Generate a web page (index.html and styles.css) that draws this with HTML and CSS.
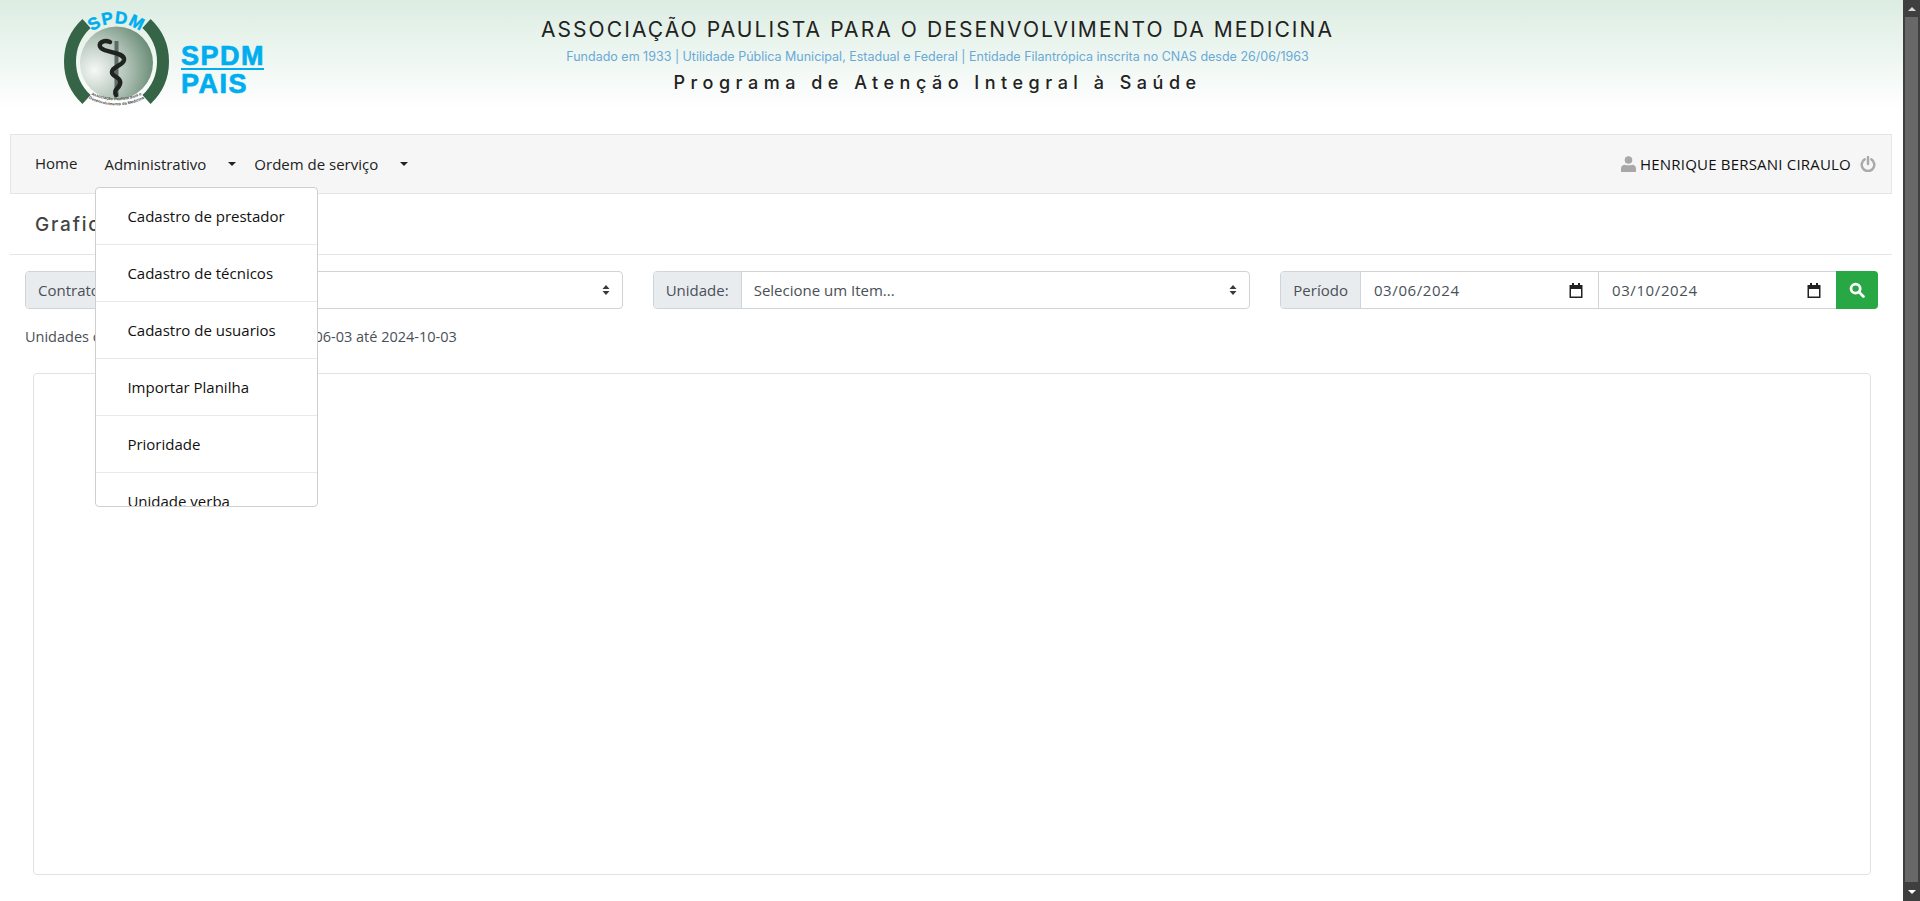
FILE: index.html
```html
<!DOCTYPE html>
<html lang="pt-BR">
<head>
<meta charset="utf-8">
<title>SPDM PAIS</title>
<link rel="stylesheet" href="styles.css">
</head>
<body>
<main class="page">
  <header class="top">
    <svg class="logo" width="290" height="110" viewBox="0 0 290 110">
      <defs>
        <radialGradient id="ball" cx="0.2" cy="0.6" r="0.9">
          <stop offset="0" stop-color="#f6f8f6"/>
          <stop offset="0.5" stop-color="#b0c2b6"/>
          <stop offset="1" stop-color="#5a7f68"/>
        </radialGradient>
        <path id="arcTop" d="M80 47 A40 40 0 0 1 153 47"/>
        <path id="arcBot1" d="M83 90 A60 60 0 0 0 150 90"/>
        <path id="arcBot2" d="M80 93 A60 60 0 0 0 153 93"/>
      </defs>
      <path class="ring" d="M86.500 23.500 A52 52 0 0 0 86.500 99.500"/>
      <path class="ring" d="M146.500 23.500 A52 52 0 0 1 146.500 99.500"/>
      <circle cx="116.500" cy="63" r="36.500" fill="url(#ball)"/>
      <rect x="114.500" y="41" width="4" height="56" fill="#5f6a64"/>
      <path class="snake" d="M110 42 C103 39 97 44 101 48 C106 53 125 52 124 60 C123 66 112 66 112 72 C112 78 122 76 120 84 C118 90 113 89 116 95"/>
      <text class="mark-top"><textPath href="#arcTop" startOffset="50%" text-anchor="middle">SPDM</textPath></text>
      <text class="mark-small"><textPath href="#arcBot1" startOffset="50%" text-anchor="middle">Associação Paulista para o</textPath></text>
      <text class="mark-small"><textPath href="#arcBot2" startOffset="50%" text-anchor="middle">Desenvolvimento da Medicina</textPath></text>
      <text class="brand" x="181" y="65">SPDM</text>
      <rect x="181" y="68" width="83" height="2" fill="#00aeef"/>
      <text class="brand" x="181" y="93">PAIS</text>
    </svg>
    <div class="org">
      <div class="org-name">ASSOCIAÇÃO PAULISTA PARA O DESENVOLVIMENTO DA MEDICINA</div>
      <div class="org-sub">Fundado em 1933 | Utilidade Pública Municipal, Estadual e Federal | Entidade Filantrópica inscrita no CNAS desde 26/06/1963</div>
      <div class="org-prog">Programa de Atenção Integral à Saúde</div>
    </div>
  </header>

  <nav class="navbar">
    <a class="nav-link nav-home">Home</a>
    <div class="nav-drop">
      <a class="nav-link nav-admin">Administrativo<i class="caret"></i></a>
      <ul class="menu">
        <li>Cadastro de prestador</li>
        <li>Cadastro de técnicos</li>
        <li>Cadastro de usuarios</li>
        <li>Importar Planilha</li>
        <li>Prioridade</li>
        <li>Unidade verba</li>
      </ul>
    </div>
    <a class="nav-link nav-os">Ordem de serviço<i class="caret"></i></a>
    <div class="user">
      <svg class="user-ico" width="15" height="16" viewBox="0 0 15 16"><circle cx="7.500" cy="4" r="3.800"/><path d="M0 16 V12.500 C0 10 2 8.800 3.800 8.800 C5 9.500 10 9.500 11.200 8.800 C13 8.800 15 10 15 12.500 V16 Z"/></svg>
      <span>HENRIQUE BERSANI CIRAULO</span>
      <svg class="power" width="16" height="16" viewBox="0 0 16 16"><path d="M4.600 3.400 A6.300 6.300 0 1 0 11.400 3.400"/><path d="M8 1 V8"/></svg>
    </div>
  </nav>

  <h1 class="title">Graficos</h1>

  <section class="filters">
    <div class="group">
      <span class="addon">Contrato:</span>
      <div class="field sel"><span>Selecione um Item...</span><svg class="updown" width="8" height="12" viewBox="0 0 8 12"><path d="M4 1 L7.500 5 H0.500 Z M4 11 L0.500 7 H7.500 Z"/></svg></div>
    </div>
    <div class="group">
      <span class="addon">Unidade:</span>
      <div class="field sel"><span>Selecione um Item...</span><svg class="updown" width="8" height="12" viewBox="0 0 8 12"><path d="M4 1 L7.500 5 H0.500 Z M4 11 L0.500 7 H7.500 Z"/></svg></div>
    </div>
    <div class="group">
      <span class="addon">Período</span>
      <div class="field date"><span>03/06/2024</span><svg class="cal" width="14" height="15" viewBox="0 0 14 15"><path d="M3 0 H5 V2 H9 V0 H11 V2 H13.500 V15 H0.500 V2 H3 Z M2 6 V13.500 H12 V6 Z"/></svg></div>
      <div class="field date"><span>03/10/2024</span><svg class="cal" width="14" height="15" viewBox="0 0 14 15"><path d="M3 0 H5 V2 H9 V0 H11 V2 H13.500 V15 H0.500 V2 H3 Z M2 6 V13.500 H12 V6 Z"/></svg></div>
      <button class="search"><svg width="16" height="16" viewBox="0 0 15 15"><circle cx="6.200" cy="6.200" r="4.300"/><path d="M9.500 9.500 L13.500 13.500"/></svg></button>
    </div>
  </section>

  <p class="range">Unidades com ordens de serviços de 2024-06-03 até 2024-10-03</p>

  <section class="card"></section>
</main>

<aside class="scrollbar">
  <div class="sb-btn"><i class="sb-up"></i></div>
  <div class="sb-track"><div class="sb-thumb"></div></div>
  <div class="sb-btn sb-btn-end"><i class="sb-down"></i></div>
</aside>
</body>
</html>
```
FILE: styles.css
```css
* { box-sizing: border-box; }
html, body { height: 100%; }
body {
  margin: 0;
  display: flex;
  overflow: hidden;
  background: #fff;
  color: #212529;
  font-family: "Open Sans", "Noto Sans", sans-serif;
  font-size: 15px;
}
.page { flex: 1; min-width: 0; padding: 0 11px 0 10px; position: relative; }

/* header */
.top {
  margin: 0 -11px 0 -10px;
  height: 134px;
  display: flex;
  background: linear-gradient(#dcede2 0, #fff 110px);
}
.logo { flex: none; }
.ring { fill: none; stroke: #356546; stroke-width: 12; }
.snake { fill: none; stroke: #1f2321; stroke-width: 4.500; stroke-linecap: round; }
.mark-top { font: bold 17px "Liberation Sans", sans-serif; fill: #00aeef; stroke: #00aeef; stroke-width: .5px; letter-spacing: .8px; }
.mark-small { font: bold 4px "Liberation Sans", sans-serif; fill: #444; }
.brand { font: bold 27px "Liberation Sans", sans-serif; fill: #00aeef; stroke: #00aeef; stroke-width: .7px; letter-spacing: 1.500px; }
.org { position: absolute; left: 0; width: 1875px; top: 0; text-align: center; pointer-events: none; }
.org-name { margin-top: 17px; font: 400 21px/26px Inter, sans-serif; letter-spacing: 2.080px; color: #222; }
.org-sub { margin-top: 6px; font: 400 12.500px/16px Inter, sans-serif; color: #6aa9d6; }
.org-prog { margin-top: 7px; font: 500 18px/22px Inter, sans-serif; letter-spacing: 5.500px; color: #222; }

/* navbar */
.navbar {
  height: 60px;
  display: flex;
  align-items: center;
  padding: 0 15px 0 24px;
  background: #f6f6f6;
  border: 1px solid #e5e5e5;
}
.nav-link { color: #222; white-space: nowrap; }
.nav-home { margin-bottom: 2px; }
.nav-drop { position: relative; margin-left: 27px; }
.nav-admin, .nav-os { display: flex; align-items: center; }
.nav-os { margin-left: 18px; }
.caret {
  margin-left: 22px;
  border-top: 4.500px solid #222;
  border-left: 4.500px solid transparent;
  border-right: 4.500px solid transparent;
}
.menu {
  position: absolute;
  z-index: 5;
  top: 33px;
  left: -9px;
  width: 223px;
  height: 320px;
  margin: 0;
  padding: 0;
  list-style: none;
  overflow: hidden;
  background: #fff;
  border: 1px solid #cfcfcf;
  border-radius: 4px;
}
.menu li {
  height: 57px;
  padding: 17px 0 0 31px;
  line-height: 22px;
  color: #111;
  border-bottom: 1px solid #e6e8ec;
}
.user { margin-left: auto; display: flex; align-items: center; color: #111; white-space: nowrap; letter-spacing: .2px; }
.user-ico { fill: #a8a8a8; margin-right: 4px; }
.power { margin-left: 9px; fill: none; stroke: #aaa; stroke-width: 2.500; stroke-linecap: round; }

/* title */
.title {
  margin: 0;
  height: 61px;
  padding: 16px 0 0 25px;
  font: 500 19px/30px Inter, sans-serif;
  letter-spacing: 1.800px;
  color: #444;
  border-bottom: 1px solid #e5e5e5;
}

/* filters */
.filters { display: flex; gap: 30px; padding: 16px 14px 0 15px; }
.group {
  flex: 1;
  display: flex;
  height: 38px;
  border: 1px solid #ced4da;
  border-radius: 4px;
  color: #495057;
}
.addon {
  display: flex;
  align-items: center;
  padding: 0 12px;
  background: #e9ecef;
  border-right: 1px solid #ced4da;
  border-radius: 3px 0 0 3px;
  white-space: nowrap;
}
.field {
  display: flex;
  align-items: center;
  justify-content: space-between;
  flex: 1;
  min-width: 0;
}
.sel { padding: 0 12px; }
.date { padding: 0 15px 0 13px; letter-spacing: .6px; }
.field + .field { border-left: 1px solid #ced4da; }
.updown { fill: #343a40; }
.cal { fill: #222; }
.search {
  width: 42px;
  margin: -1px -1px -1px 0;
  border: 0;
  padding: 0;
  border-radius: 0 4px 4px 0;
  background: #28a745;
  display: flex;
  align-items: center;
  justify-content: center;
}
.search svg { fill: none; stroke: #fff; stroke-width: 2.600; stroke-linecap: round; }

.range { margin: 16px 0 0 15px; font-size: 14.500px; line-height: 24px; color: #495057; }

/* card */
.card {
  margin: 24px 21px 0 23px;
  height: 502px;
  border: 1px solid #e2e2e2;
  border-radius: 4px;
}

/* scrollbar */
.scrollbar {
  flex: none;
  width: 17px;
  height: 100%;
  display: flex;
  flex-direction: column;
  background: #3f3f3f;
}
.sb-btn { height: 17px; display: flex; align-items: center; justify-content: center; }
.sb-btn-end { height: 19px; }
.sb-up { border-bottom: 4px solid #d8d8d8; border-left: 4px solid transparent; border-right: 4px solid transparent; }
.sb-down { border-top: 4px solid #fff; border-left: 4px solid transparent; border-right: 4px solid transparent; }
.sb-track { flex: 1; padding: 0 1px; }
.sb-thumb { height: 100%; background: #686868; margin: 0 1px; }
```
